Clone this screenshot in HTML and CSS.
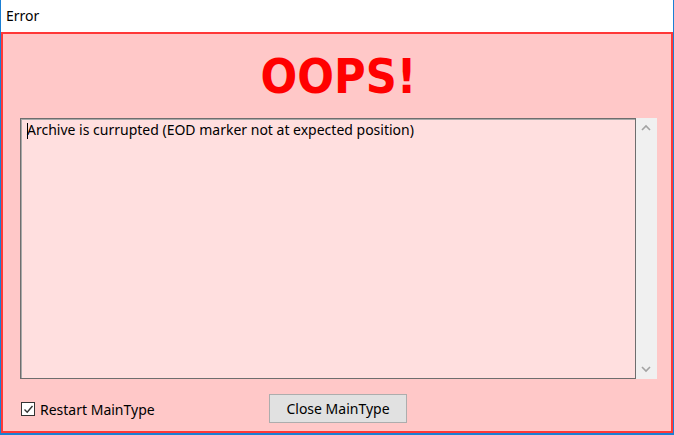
FILE: index.html
```html
<!DOCTYPE html>
<html lang="en">
<head>
<meta charset="UTF-8">
<title>Error</title>
<link rel="stylesheet" href="styles.css">
</head>
<body>

<div class="window">
  <div class="titlebar">Error</div>

  <div class="panel">
    <h1 class="oops">OOPS!</h1>

    <div class="message-area">
      <div class="message-box"><span class="caret"></span>Archive is currupted (EOD marker not at expected position)</div>
      <div class="scrollbar">
        <svg width="20" height="20" viewBox="0 0 20 20"><path d="M6 12 L10 8 L14 12" fill="none" stroke="#a3a3a3" stroke-width="1.6"/></svg>
        <svg width="20" height="20" viewBox="0 0 20 20"><path d="M6 8 L10 12 L14 8" fill="none" stroke="#a3a3a3" stroke-width="1.6"/></svg>
      </div>
    </div>

    <div class="footer">
      <label class="restart">
        <span class="checkbox">
          <svg width="11" height="11" viewBox="0 0 11 11"><path d="M1.5 5.5 L4.2 8.2 L9.5 2" fill="none" stroke="#333" stroke-width="1.4"/></svg>
        </span>
        Restart MainType
      </label>
      <button class="close-btn">Close MainType</button>
    </div>
  </div>
</div>

</body>
</html>
```

FILE: styles.css
```css
* {
  margin: 0;
  padding: 0;
  box-sizing: border-box;
}

body {
  background: #ffffff;
  font-family: 'Noto Sans', 'Open Sans', sans-serif;
  font-size: 14px;
  color: #000000;
}

.window {
  width: 674px;
  height: 435px;
  display: flex;
  flex-direction: column;
  border-left: 1px solid #1a7fd4;
  border-right: 1px solid #1a7fd4;
  border-bottom: 2px solid #1a7fd4;
}

.titlebar {
  height: 32px;
  line-height: 32px;
  padding-left: 5px;
  background: #ffffff;
}

.panel {
  flex: 1;
  display: flex;
  flex-direction: column;
  background: #ffc8c8;
  border: 2px solid #ff3838;
  padding: 18px 14px 8px 17px;
}

.oops {
  font-family: 'DejaVu Sans Condensed', 'DejaVu Sans', sans-serif;
  font-weight: bold;
  font-size: 48px;
  line-height: 48px;
  color: #ff0000;
  text-align: center;
  margin-bottom: 18px;
}

.message-area {
  display: flex;
  height: 261px;
}

.message-box {
  flex: 1;
  background: #ffdfdf;
  border: 1px solid #6e6e6e;
  box-shadow: inset 1px 1px 0 #a8a8a8;
  padding: 1px 6px;
  line-height: 19px;
  position: relative;
}

.caret {
  position: absolute;
  left: 6px;
  top: 4px;
  width: 1px;
  height: 16px;
  background: #000000;
}

.scrollbar {
  width: 21px;
  background: #f0f0f0;
  display: flex;
  flex-direction: column;
  justify-content: space-between;
}

.footer {
  display: flex;
  align-items: center;
  margin-top: 15px;
  height: 29px;
}

.restart {
  width: 249px;
  display: flex;
  align-items: center;
  gap: 5px;
  padding-left: 1px;
  margin-top: 1px;
}

.checkbox {
  width: 14px;
  height: 14px;
  border: 1px solid #333333;
  background: #ffffff;
  display: flex;
  align-items: center;
  justify-content: center;
}

.close-btn {
  width: 138px;
  height: 29px;
  background: #e1e1e1;
  border: 1px solid #adadad;
  font-family: inherit;
  font-size: 14px;
  color: #000000;
}
```
